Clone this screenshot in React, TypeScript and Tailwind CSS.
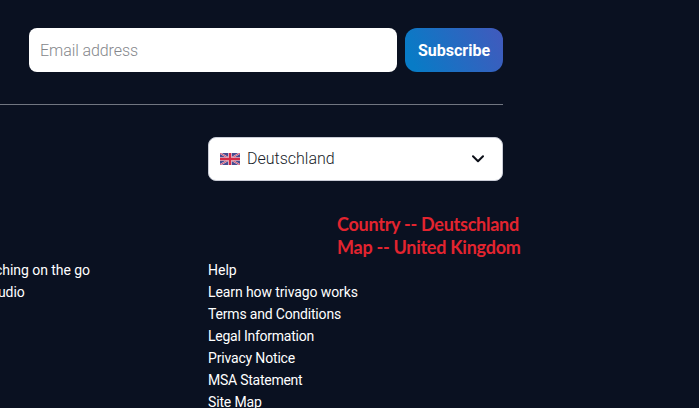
import React from "react";

const links = [
  { label: "Help", tracking: "tracking-[0px]" },
  { label: "Learn how trivago works", tracking: "tracking-[-0.1px]" },
  { label: "Terms and Conditions", tracking: "tracking-[-0.18px]" },
  { label: "Legal Information", tracking: "tracking-[-0.24px]" },
  { label: "Privacy Notice", tracking: "tracking-[-0.17px]" },
  { label: "MSA Statement", tracking: "tracking-[-0.25px]" },
  { label: "Site Map", tracking: "tracking-[-0.15px]" },
];

function Flag() {
  return (
    <svg width="20" height="12" viewBox="0 0 60 36" preserveAspectRatio="none" className="block shrink-0">
      <rect width="60" height="36" fill="#474b91" />
      <path d="M0 0L60 36M60 0L0 36" stroke="#e3d6e3" strokeWidth="5.5" />
      <path d="M0 0L60 36M60 0L0 36" stroke="#d8506c" strokeWidth="3" />
      <path d="M30 0V36M0 18H60" stroke="#f0dfe8" strokeWidth="11" />
      <path d="M30 0V36M0 18H60" stroke="#d52b45" strokeWidth="7" />
    </svg>
  );
}

export default function App() {
  return (
    <div className="h-[408px] w-[700px] overflow-hidden bg-white">
      <div className="h-full w-[699px] overflow-hidden bg-[#0a1121] pt-7 font-['Roboto',sans-serif]">
        <form className="flex h-11 w-[503px] gap-2 pl-[29px]">
          <div className="flex h-11 w-[368px] items-center rounded-lg bg-white pt-0.5 pl-[11px] text-[16px] font-light tracking-[-0.08px] text-[#85878c]">
            <span className="whitespace-nowrap">Email address</span>
          </div>
          <button
            type="button"
            className="flex h-11 w-[98px] items-center justify-center rounded-xl bg-linear-[65deg,#087bc6_10%,#3f5bbd_95%] pt-0.5 text-[16px] font-bold text-white"
          >
            Subscribe
          </button>
        </form>

        <div className="mt-8 h-px w-[503px] bg-[#717681]" />

        <div className="mt-8 ml-[208px] flex h-11 w-[295px] items-center rounded-lg border border-[#c9ccd6] bg-white pr-[18px] pl-[11px]">
          <Flag />
          <span className="ml-[7px] text-[16px] font-light text-[#171b28]">Deutschland</span>
          <svg width="12" height="8" viewBox="0 0 12 8" className="ml-auto block" fill="none" stroke="#0c0f18" strokeWidth="2" strokeLinecap="round" strokeLinejoin="round">
            <path d="M1 1.2L6 6.2L11 1.2" />
          </svg>
        </div>

        <div className="mt-8 ml-[337px] h-[46px] font-['Lato','Liberation_Sans',sans-serif] text-[18px] leading-[23px] font-bold tracking-[-0.26px] whitespace-nowrap text-[#e3242f]">
          <p>Country -- Deutschland</p>
          <p>Map -- United Kingdom</p>
        </div>

        <div className="flex text-[14px] leading-[22px] whitespace-nowrap text-white">
          <div className="flex w-[208px] flex-col items-start">
            <span className="-ml-[5px] tracking-[-0.05px]">ching on the go</span>
            <span className="-ml-[2px] tracking-[-0.1px]">udio</span>
          </div>
          <ul>
            {links.map((l) => (
              <li key={l.label} className={l.tracking}>{l.label}</li>
            ))}
          </ul>
        </div>
      </div>
    </div>
  );
}
